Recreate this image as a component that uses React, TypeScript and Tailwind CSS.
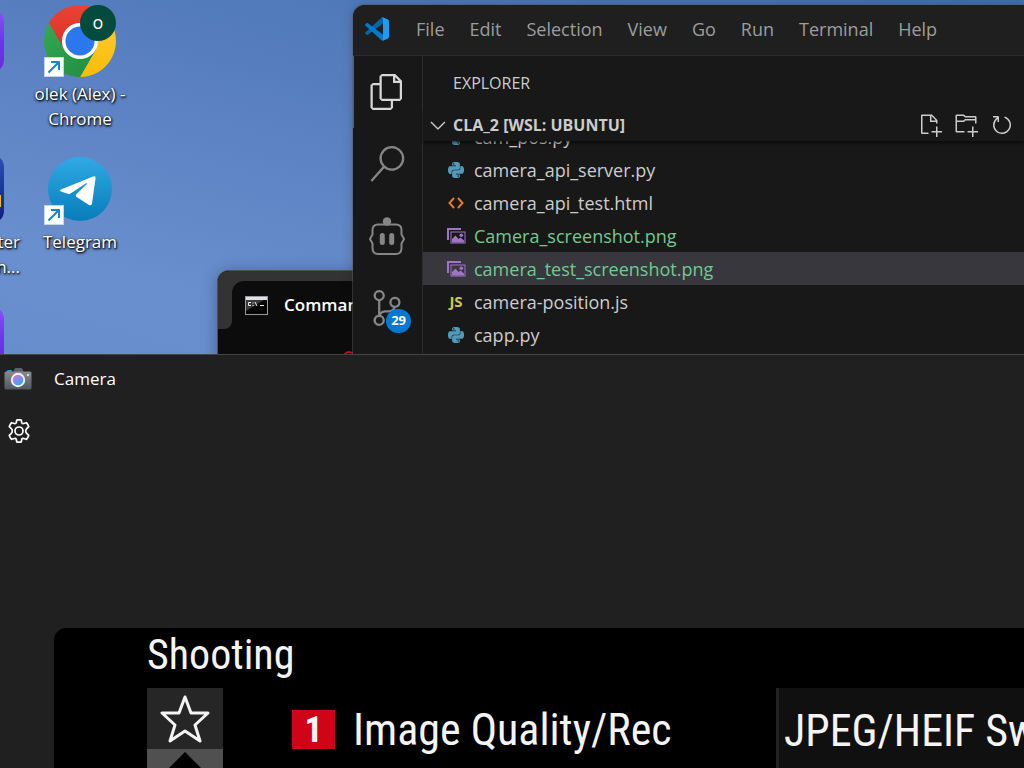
import React from "react";
import { SiPython } from "react-icons/si";
import { VscNewFile, VscNewFolder, VscRefresh, VscChevronDown } from "react-icons/vsc";

function ShortcutArrow() {
  return (
    <span className="absolute bottom-0 left-0 flex h-5 w-5 items-center justify-center border border-[#c9d3e0] bg-white">
      <svg viewBox="0 0 18 18" className="h-full w-full" fill="none" stroke="#1583d0" strokeWidth="2">
        <path d="M3.5 14.5 14 4M6 4h8.5M14 3.5V12" />
      </svg>
    </span>
  );
}

function ChromeIcon() {
  return (
    <svg viewBox="0 0 48 48" className="h-[72px] w-[72px]">
      <defs>
        <linearGradient id="chrome-red" x1="0" y1="0" x2="0" y2="1">
          <stop offset="0" stopColor="#ea4335" />
          <stop offset="1" stopColor="#d93025" />
        </linearGradient>
        <linearGradient id="chrome-green" x1="0" y1="0" x2="1" y2="1">
          <stop offset="0" stopColor="#34a853" />
          <stop offset="1" stopColor="#1e8e3e" />
        </linearGradient>
        <linearGradient id="chrome-yellow" x1="0" y1="0" x2="0" y2="1">
          <stop offset="0" stopColor="#fcc934" />
          <stop offset="1" stopColor="#fbbc04" />
        </linearGradient>
      </defs>
      <path fill="url(#chrome-red)" d="M3.22 12A24 24 0 0 1 44.78 12L24 12L24 24L13.6 30Z" />
      <path fill="url(#chrome-yellow)" d="M44.78 12A24 24 0 0 1 24 48L34.4 30L24 24L24 12Z" />
      <path fill="url(#chrome-green)" d="M24 48A24 24 0 0 1 3.22 12L13.6 30L24 24L34.4 30Z" />
      <circle cx="24" cy="24" r="12" fill="#fff" />
      <circle cx="24" cy="24" r="9.7" fill="#2b78ee" />
    </svg>
  );
}

function TelegramIcon() {
  return (
    <svg viewBox="0 0 64 64" className="h-16 w-16">
      <defs>
        <linearGradient id="telegram-disc" x1="0" y1="0" x2="0" y2="1">
          <stop offset="0" stopColor="#30a9e4" />
          <stop offset="1" stopColor="#077dba" />
        </linearGradient>
      </defs>
      <circle cx="32" cy="32" r="32" fill="url(#telegram-disc)" />
      <path
        fill="#fff"
        d="M13 32.5 45 19.4q3-1 2.5 2L44 46.5q-.7 2.7-3 1.5L29 40.2q-2.3-1.500-.3-3.500L39.500 26.500q-1-.5-2.500.5L22.500 36.500q-1.500.8-3.500 0L13 34.500q-2-1 0-2Z"
      />
    </svg>
  );
}

function CodeLogo() {
  return (
    <svg viewBox="0 0 100 100" className="h-6 w-6">
      <clipPath id="code-logo-shape">
        <path
          clipRule="evenodd"
          d="M70.9119 99.3171C72.4869 99.9307 74.2828 99.8914 75.8725 99.1264L96.4608 89.2197C98.6242 88.1787 100 85.9892 100 83.5872V16.4133C100 14.0113 98.6243 11.8218 96.4609 10.7808L75.8725 0.873756C73.7862 -0.130129 71.3446 0.11576 69.5135 1.44695C69.252 1.63711 69.0028 1.84943 68.769 2.08341L29.3551 38.0415L12.1872 25.0096C10.589 23.7965 8.35363 23.8959 6.86933 25.2461L1.36303 30.2549C-0.452552 31.9064 -0.454633 34.7627 1.35853 36.417L16.2471 50.0001L1.35853 63.5832C-0.454633 65.2374 -0.452552 68.0938 1.36303 69.7453L6.86933 74.7541C8.35363 76.1043 10.589 76.2037 12.1872 74.9905L29.3551 61.9587L68.769 97.9167C69.3925 98.5406 70.1246 99.0104 70.9119 99.3171ZM75.0152 27.2989L45.1091 50.0001L75.0152 72.7012V27.2989Z"
        />
      </clipPath>
      <g clipPath="url(#code-logo-shape)">
        <path fill="#0065A9" d="M96.4614 10.7962L75.8569 0.875542C73.4719 -0.272773 70.6217 0.211611 68.75 2.08333L1.29858 63.5832C-0.515693 65.2373 -0.513607 68.0937 1.30308 69.7452L6.81272 74.754C8.29793 76.1042 10.5347 76.2036 12.1338 74.9905L93.3609 13.3699C96.086 11.3026 100 13.2462 100 16.6667V16.4275C100 14.0265 98.6246 11.8378 96.4614 10.7962Z" />
        <path fill="#007ACC" d="M96.4614 89.2038L75.8569 99.1245C73.4719 100.273 70.6217 99.7884 68.75 97.9167L1.29858 36.4169C-0.515693 34.7627 -0.513607 31.9063 1.30308 30.2548L6.81272 25.246C8.29793 23.8958 10.5347 23.7964 12.1338 25.0095L93.3609 86.6301C96.086 88.6974 100 86.7538 100 83.3334V83.5726C100 85.9735 98.6246 88.1622 96.4614 89.2038Z" />
        <path fill="#1F9CF0" d="M75.8578 99.1263C73.4721 100.274 70.6219 99.7885 68.75 97.9166C71.0564 100.223 75 98.5895 75 95.3278V4.67213C75 1.41039 71.0564 -0.223106 68.75 2.08329C70.6219 0.211402 73.4721 -0.273666 75.8578 0.873633L96.4587 10.7807C98.6234 11.8217 100 14.0112 100 16.4132V83.5871C100 85.9891 98.6234 88.1786 96.4586 89.2196L75.8578 99.1263Z" />
      </g>
    </svg>
  );
}

function FilesIcon() {
  return (
    <svg viewBox="0 0 24 24" className="h-9 w-9" fill="currentColor">
      <path d="M17.5 0h-9L7 1.5V6H2.5L1 7.5v15.07L2.5 24h12.07L16 22.57V18h4.7l1.3-1.43V4.5L17.5 0zm0 2.12l2.38 2.38H17.5V2.12zm-3 20.38h-12v-15H7v9.07L8.5 18h6v4.5zm6-6h-12v-15H16V6h4.5v10.5z" />
    </svg>
  );
}

function SearchIcon() {
  return (
    <svg viewBox="0 0 24 24" className="h-9 w-9" fill="currentColor">
      <path d="M15.25 0a8.25 8.25 0 0 0-6.18 13.72L1 22.88l1.12 1 8.05-9.12A8.251 8.251 0 1 0 15.25.01V0zm0 15a6.75 6.75 0 1 1 0-13.5 6.75 6.75 0 0 1 0 13.5z" />
    </svg>
  );
}

function BotIcon() {
  return (
    <svg viewBox="0 0 36 38" className="h-[38px] w-9" fill="none" stroke="currentColor" strokeWidth="2">
      <circle cx="18" cy="4.5" r="4.2" fill="currentColor" stroke="none" />
      <path d="M9 7.5h18q5.5 0 5.5 5.5v4.5l2.5 4.5-2.5 4.5V31q0 6-5.5 6H9q-5.5 0-5.5-6v-4.5L1 22l2.5-4.5V13Q3.5 7.5 9 7.5Z" />
      <path d="M13.3 18.5v7M22.7 18.5v7" strokeWidth="5" strokeLinecap="round" />
    </svg>
  );
}

function SourceControlIcon() {
  return (
    <svg viewBox="0 0 24 24" className="h-9 w-9" fill="currentColor">
      <path d="M21.007 8.222A3.738 3.738 0 0 0 15.045 5.2a3.737 3.737 0 0 0 1.156 6.583 2.988 2.988 0 0 1-2.668 1.67h-2.99a4.456 4.456 0 0 0-2.989 1.165V7.4a3.737 3.737 0 1 0-1.494 0v9.117a3.776 3.776 0 1 0 1.816.099 2.99 2.99 0 0 1 2.668-1.667h2.99a4.484 4.484 0 0 0 4.223-3.039 3.736 3.736 0 0 0 3.25-3.687zM4.565 3.738a2.242 2.242 0 1 1 4.484 0 2.242 2.242 0 0 1-4.484 0zm4.484 16.441a2.242 2.242 0 1 1-4.484 0 2.242 2.242 0 0 1 4.484 0zm8.221-9.715a2.242 2.242 0 1 1 0-4.485 2.242 2.242 0 0 1 0 4.485z" />
    </svg>
  );
}

function MarkupFileIcon() {
  return (
    <svg viewBox="0 0 16 12" className="h-3 w-4" fill="none" stroke="#e37933" strokeWidth="2">
      <path d="M6 1 1.5 6 6 11M10 1l4.5 5L10 11" />
    </svg>
  );
}

function ImageFileIcon() {
  return (
    <svg viewBox="0 0 19 16" className="h-4 w-[19px]" fill="#a074c4">
      <path d="M0 0h14v2H2v10H0z" />
      <path fillRule="evenodd" d="M3.5 3.5h15v12h-15zM4.5 4.5v10h13v-10z" />
      <path d="M5 14.5v-3.5l3.5-3.5 3 3.5 2-1.5 3.5 3v2Z" />
      <circle cx="14.3" cy="7.3" r="1.8" />
    </svg>
  );
}

type FileKind = "py" | "html" | "png" | "js";

function FileIcon({ kind }: { kind: FileKind }) {
  if (kind === "py") return <SiPython className="h-4 w-4 text-[#519aba]" />;
  if (kind === "html") return <MarkupFileIcon />;
  if (kind === "png") return <ImageFileIcon />;
  return <span className="text-[15px] leading-none font-bold text-[#cbcb41]">JS</span>;
}

const files: { name: string; kind: FileKind; added?: boolean; selected?: boolean }[] = [
  { name: "cam_pos.py", kind: "py" },
  { name: "camera_api_server.py", kind: "py" },
  { name: "camera_api_test.html", kind: "html" },
  { name: "Camera_screenshot.png", kind: "png", added: true },
  { name: "camera_test_screenshot.png", kind: "png", added: true, selected: true },
  { name: "camera-position.js", kind: "js" },
  { name: "capp.py", kind: "py" },
];

const menus = ["File", "Edit", "Selection", "View", "Go", "Run", "Terminal", "Help"];

const labelStyle = "text-center text-[17px] leading-[25px] text-white [text-shadow:1px_1px_2px_#000,0_1px_3px_#000]";

function Desktop() {
  return (
    <>
      <div className="absolute top-[10px] -left-16 h-[62px] w-[68px] rounded-xl bg-gradient-to-b from-[#8b50f5] via-[#7033ee] to-[#6f28dc]" />
      <button className="absolute top-[5px] left-5 flex w-[120px] flex-col items-center">
        <span className="relative">
          <ChromeIcon />
          <span className="absolute top-0 right-0 flex h-9 w-9 items-center justify-center rounded-full bg-[#044a3d] pb-[3px] text-[18px] leading-none text-white">
            o
          </span>
          <ShortcutArrow />
        </span>
        <span className={`mt-1 ${labelStyle}`}>
          olek (Alex) -<br />
          Chrome
        </span>
      </button>
      <div className="absolute top-[155px] -left-16 flex h-[68px] w-[68px] items-end justify-end rounded-xl bg-gradient-to-b from-[#2b50b8] to-[#101d7c]">
        <span className="mr-[3px] mb-4 h-3 w-3 bg-[#f2ba12]" />
      </div>
      <div className={`absolute top-[229px] -left-20 w-[100px] ${labelStyle}`}>
        <p className="text-right">Printer</p>
        <p className="text-right">Admin...</p>
      </div>
      <button className="absolute top-[153px] left-5 flex w-[120px] flex-col items-center">
        <span className="relative flex h-[72px] w-[72px] items-center justify-center">
          <TelegramIcon />
          <ShortcutArrow />
        </span>
        <span className={`mt-1 ${labelStyle}`}>Telegram</span>
      </button>
      <div className="absolute top-[307px] -left-16 h-[62px] w-[68px] rounded-xl bg-gradient-to-b from-[#8b50f5] via-[#7033ee] to-[#6f28dc]" />
    </>
  );
}

function CommandPrompt() {
  return (
    <section className="absolute top-[270px] left-[217px] h-[200px] w-[400px] overflow-hidden rounded-tl-xl border-t border-l border-[#505050] bg-[#0c0c0c] shadow-[0_2px_16px_rgba(0,0,0,0.3)]">
      <div className="flex h-[58px] bg-[#0c0c0c]">
        <div className="w-[14px] rounded-br-lg bg-[#333]" />
        <div className="flex-1 bg-[#333] pt-[10px]">
          <div className="flex h-full items-center rounded-tl-xl bg-[#0c0c0c] pl-[13px] text-[17px] font-semibold text-white">
            <svg viewBox="0 0 23 19" className="mr-4 h-[19px] w-[23px]">
              <rect x=".5" y=".5" width="22" height="18" fill="#050505" stroke="#999" />
              <path d="M1 1h21v3H1z" fill="#dde2ea" />
              <path d="M1 4h18L1 15z" fill="#3a3a3a" />
              <path d="M6 6.5H3.5v3H6M8 6.5v1M8 9v1M10 6l2 4M15 9.5h4" fill="none" stroke="#eee" />
            </svg>
            <span className="whitespace-nowrap">Command Prompt</span>
          </div>
        </div>
      </div>
      <span className="absolute top-[80px] left-[125px] h-3 w-3 rounded-full border-2 border-[#c50f1f]" />
    </section>
  );
}

function Editor() {
  return (
    <section className="absolute top-[5px] right-0 left-[353px] flex h-[420px] flex-col overflow-hidden rounded-tl-xl bg-[#181818] shadow-[0_0_0_1px_rgba(90,90,90,0.5),0_0_12px_rgba(0,0,0,0.2)]">
      <header className="flex h-[51px] shrink-0 items-center border-b border-[#2b2b2b] bg-[#1f1f1f] pb-[3px] pl-3">
        <CodeLogo />
        <nav className="ml-[27px] flex gap-[25px] text-[18px] leading-6 text-[#9d9d9d]">
          {menus.map((menu) => (
            <button key={menu}>{menu}</button>
          ))}
        </nav>
      </header>
      <div className="flex min-h-0 flex-1">
        <aside className="flex w-[70px] shrink-0 flex-col border-r border-[#2b2b2b] text-[#868686]">
          <button aria-label="Explorer" className="flex h-[72px] items-center border-l border-[#0078d4] pl-[15px] text-[#d7d7d7]">
            <FilesIcon />
          </button>
          <button aria-label="Search" className="flex h-[72px] items-center pl-4">
            <SearchIcon />
          </button>
          <button aria-label="Assistant" className="flex h-[72px] items-center pl-4">
            <BotIcon />
          </button>
          <button aria-label="Source Control" className="relative flex h-[72px] items-center pl-4">
            <SourceControlIcon />
            <span className="absolute right-[11px] bottom-[11px] flex h-6 items-center rounded-full bg-[#0078d4] px-[5px] text-[13px] font-bold text-white">
              29
            </span>
          </button>
        </aside>
        <div className="flex min-w-0 flex-1 flex-col">
          <h2 className="flex h-[53px] shrink-0 items-center pl-[30px] text-[16px] text-[#ccc]">EXPLORER</h2>
          <div className="z-10 flex h-8 shrink-0 items-center bg-[#181818] pr-[10px] text-[#ccc] shadow-[0_2px_3px_rgba(0,0,0,0.6)]">
            <button className="flex flex-1 items-center pl-[3px] text-[16px] font-bold">
              <VscChevronDown className="mr-[3px] h-6 w-6" />
              CLA_2 [WSL: UBUNTU]
            </button>
            <div className="flex gap-3">
              <button aria-label="New File"><VscNewFile className="h-6 w-6" /></button>
              <button aria-label="New Folder"><VscNewFolder className="h-6 w-6" /></button>
              <button aria-label="Refresh"><VscRefresh className="h-6 w-6" /></button>
            </div>
          </div>
          <div className="min-h-0 flex-1 overflow-hidden">
            <ul className="-mt-[21px] text-[18px]">
              {files.map((file) => (
                <li
                  key={file.name}
                  className={`flex h-[33px] items-center pl-[23px] ${file.selected ? "bg-[#37373d]" : ""} ${file.added ? "text-[#73c991]" : "text-[#ccc]"}`}
                >
                  <span className="mr-[8px] flex w-5 justify-center">
                    <FileIcon kind={file.kind} />
                  </span>
                  <span className="pt-[2px]">{file.name}</span>
                </li>
              ))}
            </ul>
          </div>
        </div>
      </div>
    </section>
  );
}

function CameraAppIcon() {
  return (
    <svg viewBox="0 0 28 22" className="h-[22px] w-7">
      <defs>
        <linearGradient id="camera-body" x1="0" y1="0" x2="0" y2="1">
          <stop offset="0" stopColor="#858b90" />
          <stop offset="1" stopColor="#51575e" />
        </linearGradient>
        <linearGradient id="camera-lens" x1="0" y1="0" x2="1" y2="1">
          <stop offset="0.2" stopColor="#c378e0" />
          <stop offset="0.8" stopColor="#35a6f2" />
        </linearGradient>
      </defs>
      <path d="M3 5V3q0-1 1-1h3q1 0 1 1v2z" fill="#2196cf" />
      <path d="M9 5l1.5-4q.3-1 1.5-1h5q1 0 1.5 1L20 5z" fill="#5b6168" />
      <rect x=".5" y="3.5" width="27" height="18" rx="1.5" fill="url(#camera-body)" />
      <circle cx="14" cy="12" r="7.2" fill="#f2f2f2" />
      <circle cx="14" cy="12" r="5.3" fill="url(#camera-lens)" />
      <circle cx="24" cy="7" r="1.2" fill="#d5dde2" />
    </svg>
  );
}

function GearIcon() {
  return (
    <svg viewBox="0 0 24 24" className="h-6 w-6" fill="none" stroke="#fff" strokeWidth="1.7" strokeLinejoin="round">
      <path d="M9.8 1Q12 .6 14.2 1L14.8 3.7Q15.2 4.9 16.6 4.5L19.4 3.7Q21 5.4 21.7 7.6L19.7 9.6Q18.7 10.5 18.7 12T19.7 14.4L21.7 16.4Q21 18.6 19.4 20.3L16.6 19.5Q15.2 19.1 14.8 20.3L14.2 23Q12 23.4 9.8 23L9.2 20.3Q8.8 19.1 7.4 19.5L4.6 20.3Q3 18.6 2.3 16.4L4.3 14.4Q5.3 13.5 5.3 12T4.3 9.6L2.3 7.6Q3 5.4 4.6 3.7L7.4 4.5Q8.8 4.9 9.2 3.7Z" />
      <circle cx="12" cy="12" r="4" />
    </svg>
  );
}

function CameraWindow() {
  return (
    <section className="absolute inset-x-0 top-[354px] bottom-0 flex flex-col overflow-hidden bg-[#202020] text-white">
      <header className="flex h-12 shrink-0 items-center border-t border-[#444] pl-1 text-[17px]">
        <CameraAppIcon />
        <span className="ml-[22px]">Camera</span>
      </header>
      <div className="flex h-[58px] shrink-0 items-center pl-[7px]">
        <button aria-label="Settings"><GearIcon /></button>
      </div>
      <div className="mt-[168px] ml-[54px] flex flex-1 flex-col overflow-hidden rounded-tl-xl bg-black pl-[93px] font-['Liberation_Sans_Narrow','Roboto_Condensed','DejaVu_Sans_Condensed',sans-serif] text-[42px] whitespace-nowrap text-[#f4f4f4]">
        <h1 className="h-[60px] shrink-0 leading-[54px]">Shooting</h1>
        <div className="flex flex-1">
          <div className="w-[76px] shrink-0">
            <div className="flex h-[61px] items-center justify-center bg-[#262626]">
              <svg viewBox="0 0 50 48" className="h-12 w-[50px]" fill="none" stroke="#f4f4f4" strokeWidth="3" strokeLinejoin="round">
                <path d="M25 2 31 18H48L35 30 40 46 25 36 10 46 15 30 2 18H19Z" />
              </svg>
            </div>
            <div className="flex h-[50px] justify-center bg-[#505050] pt-[3px]">
              <svg viewBox="0 0 48 24" className="h-6 w-12">
                <path d="M24 0 48 24H0Z" fill="#000" />
              </svg>
            </div>
          </div>
          <div className="ml-[69px] flex h-[83px] min-w-[484px] items-center text-[44px]">
            <span className="flex h-[39px] w-[43px] items-center justify-center bg-[#cf0417] text-[36px] font-bold">1</span>
            <span className="ml-[18px]">Image Quality/Rec</span>
          </div>
          <div className="flex flex-1 items-start border-l-[3px] border-[#222] bg-[#101010] pl-[5px] text-[44px]">
            <span className="leading-[86px]">JPEG/HEIF Switch</span>
          </div>
        </div>
      </div>
    </section>
  );
}

export default function App() {
  return (
    <main className="relative min-h-screen overflow-hidden bg-[linear-gradient(195deg,#3f70af_0%,#587fc0_28%,#6a8fce_50%,#5d86c5_100%)] font-['Open_Sans','Noto_Sans',sans-serif]">
      <Desktop />
      <CommandPrompt />
      <Editor />
      <CameraWindow />
    </main>
  );
}
